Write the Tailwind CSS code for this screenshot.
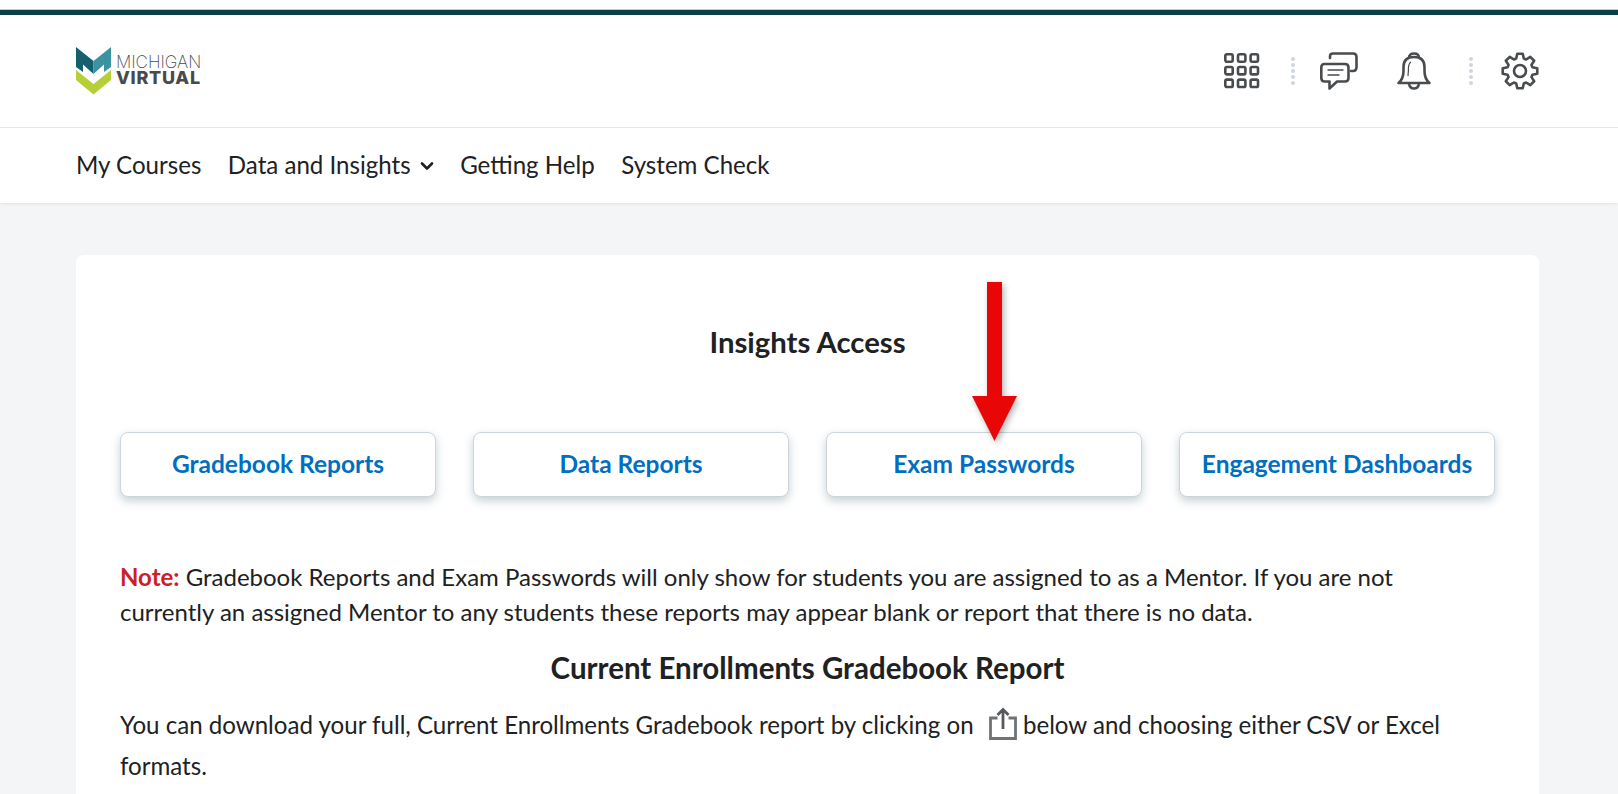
<!DOCTYPE html>
<html lang="en">
<head>
    <meta charset="UTF-8">
    <title>Insights Access</title>
    <script src="https://cdn.jsdelivr.net/npm/@tailwindcss/browser@4"></script>
</head>
<body class="bg-[#f3f5f7] h-[794px] overflow-hidden relative font-['Lato',sans-serif] text-[#202122]">
    <!-- top strip -->
    <div class="h-[10px] bg-white border-b border-[#c8c8c8]"></div>
    <div class="h-[5px] bg-[#07404a]"></div>

    <!-- header -->
    <header class="bg-white h-[113px] border-b border-[#e6e9ee] flex items-center justify-between pl-[76px] pr-[79px]">
        <div class="flex items-center gap-[5px]">
            <svg width="35" height="48" viewBox="0 0 35 48">
                <path d="M0 0 L17.5 14 V27 L7 17.5 V25 L0 20 Z" fill="#14606f"/>
                <path d="M35 0 L17.5 14 V27 L28 17.5 V25 L35 20 Z" fill="#3a93a0"/>
                <path d="M0 23 L17.5 37 L35 23 V33 L17.5 47.5 L0 33 Z" fill="#b7cf37"/>
            </svg>
            <div class="text-[#4a4a4c] font-['Inter',sans-serif] -mt-[3px]">
                <div class="text-[17px] font-extralight leading-[15px]">MICHIGAN</div>
                <div class="text-[18px] font-extrabold tracking-[0.7px] leading-[15px]">VIRTUAL</div>
            </div>
        </div>
        <div class="flex items-center">
            <svg width="36" height="36" viewBox="0 0 36 36" fill="none" stroke="#494c4e" stroke-width="2.6">
                <rect x="1.3" y="1.3" width="7.4" height="7.4" rx="1.6"/><rect x="14" y="1.3" width="7.4" height="7.4" rx="1.6"/><rect x="26.6" y="1.3" width="7.4" height="7.4" rx="1.6"/>
                <rect x="1.3" y="14" width="7.4" height="7.4" rx="1.6"/><rect x="14" y="14" width="7.4" height="7.4" rx="1.6"/><rect x="26.6" y="14" width="7.4" height="7.4" rx="1.6"/>
                <rect x="1.3" y="26.6" width="7.4" height="7.4" rx="1.6"/><rect x="14" y="26.6" width="7.4" height="7.4" rx="1.6"/><rect x="26.6" y="26.6" width="7.4" height="7.4" rx="1.6"/>
            </svg>
            <div class="ml-[31px] flex flex-col gap-[2px]">
                <span class="w-[4px] h-[4px] rounded-full bg-[#cfd6de]"></span><span class="w-[4px] h-[4px] rounded-full bg-[#cfd6de]"></span><span class="w-[4px] h-[4px] rounded-full bg-[#cfd6de]"></span><span class="w-[4px] h-[4px] rounded-full bg-[#cfd6de]"></span><span class="w-[4px] h-[4px] rounded-full bg-[#cfd6de]"></span>
            </div>
            <svg class="ml-[25px]" width="38" height="38" viewBox="0 0 38 38" fill="none" stroke="#494c4e" stroke-width="2.6" stroke-linejoin="round" stroke-linecap="round">
                <path d="M10 6 V4.5 Q10 1.5 13 1.5 H33 Q36.5 1.5 36.5 5 V15 Q36.5 19 33 19 H31"/>
                <path d="M4.5 12 H25 Q28.5 12 28.5 15.5 V26 Q28.5 29.5 25 29.5 H17 L9.5 36.5 V29.5 H4.5 Q1.3 29.5 1.3 26 V15.5 Q1.3 12 4.5 12 Z"/>
                <path d="M8 18 H23 M8 23 H19" stroke-width="1.4"/>
            </svg>
            <svg class="ml-[39px]" width="34" height="38" viewBox="0 0 34 38" fill="none" stroke="#494c4e" stroke-width="2.6" stroke-linejoin="round">
                <path d="M12 6 Q12 1.5 17 1.5 Q22 1.5 22 6"/>
                <path d="M1.5 31 Q6.5 27 6.5 19 V15 Q6.5 5 17 5 Q27.5 5 27.5 15 V19 Q27.5 27 32.5 31 Z"/>
                <path d="M12 32 Q13 36.5 17 36.5 Q21 36.5 22 32"/>
                <path d="M11 24 Q11.5 18 11.5 15 Q12 11 14 10" stroke-width="1.2"/>
            </svg>
            <div class="ml-[38px] flex flex-col gap-[2px]">
                <span class="w-[4px] h-[4px] rounded-full bg-[#cfd6de]"></span><span class="w-[4px] h-[4px] rounded-full bg-[#cfd6de]"></span><span class="w-[4px] h-[4px] rounded-full bg-[#cfd6de]"></span><span class="w-[4px] h-[4px] rounded-full bg-[#cfd6de]"></span><span class="w-[4px] h-[4px] rounded-full bg-[#cfd6de]"></span>
            </div>
            <svg class="ml-[28px]" width="38" height="38" viewBox="0 0 38 38" fill="none" stroke="#494c4e" stroke-width="2.6" stroke-linejoin="round">
                <circle cx="19" cy="19" r="6"/>
                <path d="M15.2 6.57 L16.27 1.71 H21.73 L22.8 6.57 L25.1 7.52 L29.29 4.84 L33.16 8.71 L30.48 12.9 L31.43 15.2 L36.29 16.27 V21.73 L31.43 22.8 L30.48 25.1 L33.16 29.29 L29.29 33.16 L25.1 30.48 L22.8 31.43 L21.73 36.29 H16.27 L15.2 31.43 L12.9 30.48 L8.71 33.16 L4.84 29.29 L7.52 25.1 L6.57 22.8 L1.71 21.73 V16.27 L6.57 15.2 L7.52 12.9 L4.84 8.71 L8.71 4.84 L12.9 7.52 Z"/>
            </svg>
        </div>
    </header>

    <!-- nav -->
    <nav class="bg-white h-[75px] shadow-[0_1px_3px_rgba(0,0,0,0.08)] flex items-center gap-[26.5px] pl-[76px] pb-[1px] text-[24.1px]">
        <span>My Courses</span>
        <span class="flex items-center gap-[9px]">Data and Insights
            <svg width="14" height="10" viewBox="0 0 14 10" fill="none" stroke="#202122" stroke-width="2.6" stroke-linecap="round" stroke-linejoin="round" class="mt-[3px]"><path d="M2 2.5 L7 7.5 L12 2.5"/></svg>
        </span>
        <span>Getting Help</span>
        <span>System Check</span>
    </nav>

    <!-- card -->
    <main class="bg-white rounded-[8px] ml-[76px] mr-[79px] mt-[52px] h-[700px] px-[44px]">
        <h1 class="text-[29.3px] font-bold text-center pt-[67px] leading-[40px]">Insights Access</h1>

        <div class="flex justify-between mt-[70px]">
            <a class="w-[316px] h-[65px] flex items-center justify-center bg-white border border-[#cdd5dc] rounded-[8px] shadow-[0_4px_10px_rgba(70,100,120,0.3)] text-[#006fbf] text-[24.5px] font-bold">Gradebook Reports</a>
            <a class="w-[316px] h-[65px] flex items-center justify-center bg-white border border-[#cdd5dc] rounded-[8px] shadow-[0_4px_10px_rgba(70,100,120,0.3)] text-[#006fbf] text-[24.5px] font-bold">Data Reports</a>
            <a class="w-[316px] h-[65px] flex items-center justify-center bg-white border border-[#cdd5dc] rounded-[8px] shadow-[0_4px_10px_rgba(70,100,120,0.3)] text-[#006fbf] text-[24.5px] font-bold">Exam Passwords</a>
            <a class="w-[316px] h-[65px] flex items-center justify-center bg-white border border-[#cdd5dc] rounded-[8px] shadow-[0_4px_10px_rgba(70,100,120,0.3)] text-[#006fbf] text-[24.5px] font-bold">Engagement Dashboards</a>
        </div>

        <p class="mt-[62px] max-w-[1300px] text-[24px] leading-[35px]"><strong class="text-[#cd2026] font-bold">Note:</strong> Gradebook Reports and Exam Passwords will only show for students you are assigned to as a Mentor. If you are not currently an assigned Mentor to any students these reports may appear blank or report that there is no data.</p>

        <h2 class="text-[29.5px] font-bold text-center mt-[19px] leading-[40px]">Current Enrollments Gradebook Report</h2>

        <p class="mt-[16px] text-[24.1px] leading-[41px]">You can download your full, Current Enrollments Gradebook report by clicking on
            <svg class="inline-block ml-[9px] -mt-[8px]" width="28" height="33" viewBox="0 0 28 33" fill="none" stroke="#6e7376" stroke-width="2.8">
                <path d="M8.5 11 H1.5 V31.5 H26.5 V11 H19.5"/>
                <path d="M14 22 V3 M8.5 8 L14 2.5 L19.5 8" stroke="#565a5c"/>
            </svg>
            below and choosing either CSV or Excel formats.</p>
    </main>

    <!-- annotation arrow -->
    <svg class="absolute left-[970px] top-[280px] drop-shadow-[2px_3px_3px_rgba(0,0,0,0.3)]" width="50" height="164" viewBox="0 0 50 164">
        <path d="M17 2 H32 V116 H47 L24.5 161 L2 116 H17 Z" fill="#e80606"/>
    </svg>
</body>
</html>
